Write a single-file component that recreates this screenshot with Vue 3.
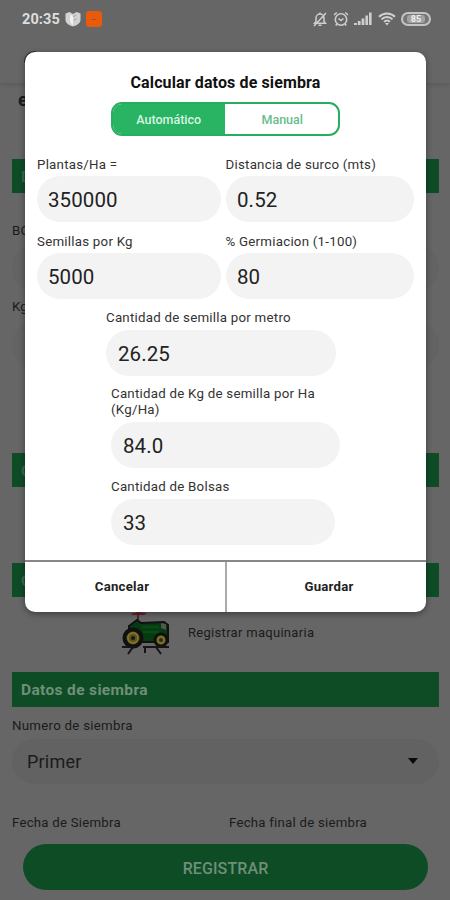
<script setup>
import { ref } from 'vue'

const mode = ref('auto')
const pairs = [
  { label: 'Plantas/Ha =', value: '350000' },
  { label: 'Distancia de surco (mts)', value: '0.52' },
  { label: 'Semillas por Kg', value: '5000' },
  { label: '% Germiacion (1-100)', value: '80' },
]
const results = [
  { label: 'Cantidad de semilla por metro', value: '26.25', kind: 'metro' },
  { label: 'Cantidad de Kg de semilla por Ha (Kg/Ha)', value: '84.0', kind: 'kg' },
  { label: 'Cantidad de Bolsas', value: '33', kind: 'bolsas' },
]
</script>

<template>
  <div class="screen">
    <header class="appbar">
      <div class="status">
        <span class="clock">20:35</span>
        <svg class="shield" width="16" height="16" viewBox="0 0 16 16">
          <path d="M.5 2.500 4.500 1 8 3l3.500-2 4 1.500V9c0 3-3.500 5.500-7.500 6.500C4 14.500 .5 12 .5 9z" fill="#d2d2d2" />
          <path d="M5.500 3.500 8 5.500V14C4.500 12 4.500 8 5.500 3.500z" fill="#f2f2f2" />
          <path d="M8.500 6 11 3.500M9.300 9.500l1.700-2" stroke="#8d8d8d" stroke-width="1" fill="none" />
        </svg>
        <span class="orange"><i></i></span>
        <svg class="bell" width="14" height="15" viewBox="0 0 14 15" fill="none" stroke="#cecece" stroke-width="1.500">
          <path d="M1.500 11.300h11L11 9.500V6a4 4 0 0 0-8 0v3.500zM7 .5V2M5.500 13.300h3M13 1 1 14" />
        </svg>
        <svg class="alarm" width="16" height="16" viewBox="0 0 16 16" fill="none" stroke="#cecece" stroke-width="1.600">
          <circle cx="8" cy="8.500" r="5.700" />
          <path d="M1 4 3.800 1.500M15 4l-2.800-2.500M5.500 7.500 8 9.500l2.500-2M4 13l-1.200 1.500M12 13l1.200 1.500" />
        </svg>
        <svg class="signal" width="18" height="14" viewBox="0 0 18 14" fill="#cecece">
          <path d="M0 11h2.800v2H0zM3.800 9h2.800v4H3.800zM7.600 6.500h2.800V13H7.600zM11.400 3.500h2.600V13h-2.600zM15 .5h2.600V13H15z" />
        </svg>
        <svg class="wifi" width="18" height="14" viewBox="0 0 18 14" fill="none" stroke="#d2d2d2" stroke-width="1.900">
          <path d="M1 4.800c4.600-4.400 11.400-4.400 16 0M3.500 7.300c3.200-3 7.800-3 11 0M6 9.800c1.800-1.700 4.200-1.700 6 0" />
          <path d="M7 11h4l-2 2.500z" fill="#d2d2d2" stroke="none" />
        </svg>
        <span class="battery"><b>85</b></span>
      </div>
      <span class="back"></span>
    </header>

    <main class="page">
      <h2 class="lot">e</h2>
      <section class="bar bar-lot">D</section>
      <label class="caption cap-bolsas">BO</label>
      <div class="ghost"></div>
      <label class="caption cap-kg">Kg</label>
      <div class="ghost"></div>
      <section class="bar bar-c">C</section>
      <section class="bar bar-m">C</section>
      <div class="machine">
        <svg width="50" height="46" viewBox="0 0 50 46">
          <path d="M10 3 17 1l9 1-3 2H11z" fill="#6d1e2c" />
          <path d="M17 4v6" stroke="#2d2226" stroke-width="1.500" />
          <path d="M8 15l8-6 4 3 23-1 4 3v17H19L8 27z" fill="#063b10" stroke="#111" stroke-width="2" />
          <path d="M21 16h17M22 21h16" stroke="#0a4a17" stroke-width="2.500" />
          <path d="m40 12 5 1v6l-5-2z" fill="#4c5850" />
          <circle cx="12" cy="27" r="8.500" fill="#5b521c" stroke="#101010" stroke-width="4" />
          <circle cx="12" cy="27" r="5" fill="none" stroke="#817127" stroke-width="2" />
          <circle cx="12" cy="27" r="2" fill="#171717" />
          <circle cx="40" cy="29" r="6" fill="#777027" stroke="#101010" stroke-width="3" />
          <circle cx="40" cy="29" r="2" fill="#2d2b17" />
          <path d="M1 36h13M22 36h26M12 36 7 43M24 36v6M35 36l5 7" stroke="#151515" stroke-width="2" fill="none" />
        </svg>
        <span>Registrar maquinaria</span>
      </div>
      <section class="bar bar-datos">Datos de siembra</section>
      <label class="caption cap-num">Numero de siembra</label>
      <div class="select"><span>Primer</span><i class="caret"></i></div>
      <div class="dates"><span>Fecha de Siembra</span><span>Fecha final de siembra</span></div>
      <button class="register">REGISTRAR</button>
    </main>

    <div class="dialog">
      <div class="dialog-body">
        <h1>Calcular datos de siembra</h1>
        <div class="toggle">
          <button :class="{ on: mode === 'auto' }" @click="mode = 'auto'">Automático</button>
          <button :class="{ on: mode === 'manual' }" @click="mode = 'manual'">Manual</button>
        </div>
        <div class="grid">
          <div v-for="f in pairs" :key="f.label" class="field">
            <label>{{ f.label }}</label>
            <div class="input">{{ f.value }}</div>
          </div>
        </div>
        <div v-for="f in results" :key="f.label" class="field result" :class="f.kind">
          <label>{{ f.label }}</label>
          <div class="input">{{ f.value }}</div>
        </div>
      </div>
      <footer class="actions">
        <button>Cancelar</button>
        <button>Guardar</button>
      </footer>
    </div>
  </div>
</template>

<style>
body { background: #666; }
</style>

<style scoped>
* { box-sizing: border-box; }
button { border: 0; padding: 0; background: none; font-family: inherit; color: inherit; }
.screen { position: relative; width: 450px; height: 900px; overflow: hidden; background: #666; font-family: Roboto, sans-serif; color: #1b1b1b; }
.appbar { height: 83px; background: #666; box-shadow: 0 1px 5px rgba(0,0,0,.16); }
.status { display: flex; align-items: center; height: 38px; padding: 0 19px 0 22px; }
.clock { width: 38px; font-size: 14.500px; font-weight: 700; color: #dedede; letter-spacing: .1px; white-space: nowrap; }
.shield { margin-left: 5px; }
.orange { width: 16px; height: 16px; margin-left: 5px; border-radius: 3px; background: #e85b0c; display: grid; place-items: center; }
.orange i { width: 4px; height: 1px; background: #b34a10; }
.bell { margin-left: auto; }
.alarm { margin-left: 6px; }
.signal { margin-left: 5px; }
.wifi { margin-left: 6px; }
.battery { width: 30px; height: 14px; margin-left: 5px; border: 2px solid #c4c4c4; border-radius: 7px; display: grid; place-items: center; background: #777; }
.battery b { width: 18px; height: 8px; background: #a2a2a2; color: #eee; font-size: 9px; line-height: 8px; text-align: center; border-radius: 3px; }
.back { display: block; width: 12px; height: 12px; margin: 13px 0 0 24px; border: 2px solid #333; border-width: 2px 0 0 2px; border-radius: 11px 0 0; }
.page { display: flex; flex-direction: column; padding: 0 11px 0 12px; }
.lot { margin: 7px 0 0 6px; height: 20px; font-size: 18px; line-height: 20px; }
.bar { height: 34px; flex: none; background: #0e4c26; padding-left: 9px; line-height: 36px; font-size: 15.500px; font-weight: 700; color: #6f8f79; letter-spacing: .35px; }
.bar-lot, .bar-c, .bar-m { color: #3d6a4c; }
.bar-lot { margin-top: 49px; }
.caption { font-size: 13.300px; line-height: 16px; height: 16px; white-space: nowrap; letter-spacing: .2px; }
.cap-bolsas { margin-top: 30px; }
.cap-kg { margin-top: 8px; }
.ghost { height: 46px; margin-top: 6px; border-radius: 23px; background: #636363; }
.cap-kg + .ghost { margin-top: 7px; }
.bar-c { margin-top: 85px; }
.bar-m { margin-top: 76px; }
.machine { height: 61px; margin: 14px 0 0 109px; display: flex; align-items: flex-start; gap: 17px; font-size: 13px; letter-spacing: .3px; }
.machine span { line-height: 16px; margin-top: 14px; }
.bar-datos { height: 35px; }
.cap-num { margin-top: 11px; letter-spacing: .25px; position: relative; top: 0; }
.select { height: 45px; margin-top: 5px; padding: 0 21px 0 15px; border-radius: 23px; background: #626262; display: flex; align-items: center; justify-content: space-between; font-size: 18px; letter-spacing: .2px; }
.caret { border: 5px solid transparent; border-top: 6px solid #0a0a0a; border-bottom: 0; margin-top: -2px; }
.dates { display: flex; margin-top: 31px; font-size: 13.200px; line-height: 16px; letter-spacing: .25px; }
.dates span { flex: 0 0 217px; white-space: nowrap; }
.register { height: 46px; margin: 13px 0 0 11px; padding-top: 2px; border-radius: 23px; width: 405px; background: #0e4c26; color: #6f8f79; font-size: 16px; font-weight: 500; letter-spacing: .1px; }
.dialog { position: absolute; left: 25px; top: 52px; width: 401px; height: 560px; border-radius: 10px; overflow: hidden; background: #fff; box-shadow: 0 2px 6px rgba(0,0,0,.4); display: flex; flex-direction: column; }
.dialog-body { flex: 1; }
h1 { margin: 20px 0 0; font-size: 16px; line-height: 21px; text-align: center; color: #111; letter-spacing: .12px; }
.toggle { width: 229px; height: 34px; margin: 9px 0 0 86px; border: 2px solid #27ae60; border-radius: 11px; overflow: hidden; display: flex; }
.toggle button { flex: 1; font-size: 12.500px; font-weight: 500; color: #68bd8d; padding-top: 1px; }
.toggle button + button { padding-left: 2px; }
.toggle .on { background: #28b463; color: #d8f3e3; }
.grid { display: grid; grid-template-columns: 189px 189px; margin: 21px 0 0 12px; row-gap: 10px; }
.field label { display: block; font-size: 13.300px; line-height: 16px; letter-spacing: .24px; color: #333; }
.input { height: 46px; margin-top: 4px; border-radius: 23px; background: #f3f3f3; padding-left: 12px; font-size: 20.500px; line-height: 48px; letter-spacing: .1px; color: #222; }
.grid .field { height: 67px; }
.grid .input { width: 184px; margin-top: 3px; padding-left: 11px; }
.grid .field:nth-child(even) label { margin-left: -.5px; }
.grid .field:nth-child(even) .input { width: 188px; }
.result { width: 229px; margin-left: 86px; margin-top: 10px; }
.result.metro { width: 230px; margin-left: 81px; margin-top: 9px; }
.result.bolsas { width: 224px; margin-top: 11px; }
.actions { display: flex; height: 52px; border-top: 2px solid #888; }
.actions button { flex: 1; font-size: 13.200px; font-weight: 700; letter-spacing: .25px; color: #222; padding-bottom: 2px; }
.actions button:first-child { flex: 0 0 200px; padding-right: 6px; }
.actions button + button { border-left: 2px solid #aaa; padding-left: 5px; }
</style>
